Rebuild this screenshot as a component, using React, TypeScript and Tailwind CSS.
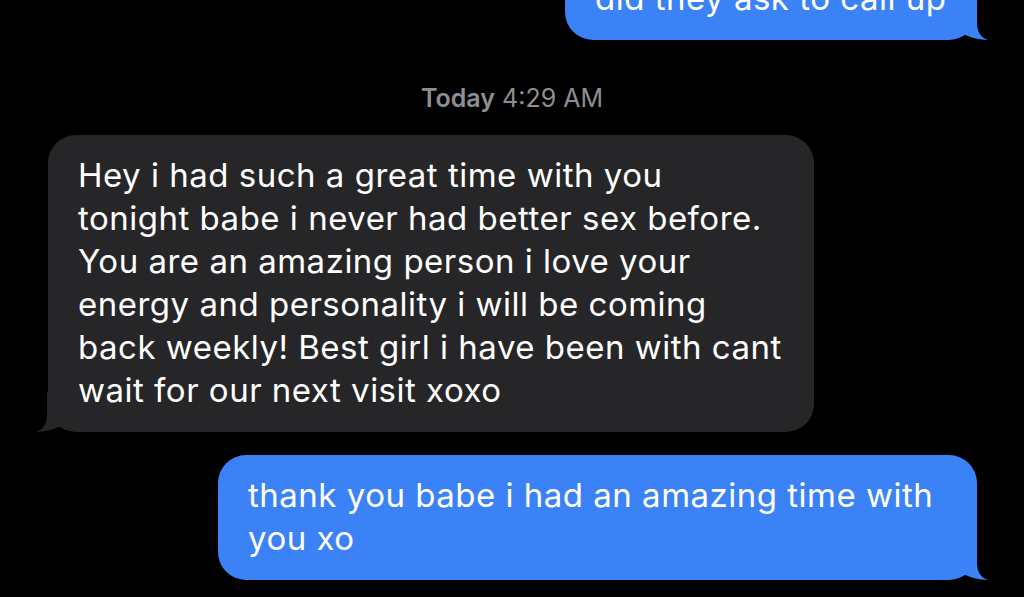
function Tail({color, side}: {color: string; side: 'left' | 'right'}) {
	const pos = side === 'right' ? 'right-[-11px]' : 'left-[-12px] -scale-x-100';
	return (
		<svg
			className={`absolute bottom-0 ${pos}`}
			width="51"
			height="40"
			viewBox="-40 -40 51 40"
			aria-hidden
		>
			<path
				d="M -40,-40 L 0,-40 L 0,-17 C 0,-7 5,-2 11,0 C 3,0 -10,-3 -17,-8 C -22,-3 -28,0 -40,0 Z"
				fill={color}
			/>
		</svg>
	);
}

function Bubble({
	lines,
	side,
	className,
}: {
	lines: string[];
	side: 'left' | 'right';
	className: string;
}) {
	const blue = side === 'right';
	return (
		<div
			className={`relative rounded-[28px] pt-[19px] pb-[20px] px-[30px] text-[33px] leading-[43px] tracking-[0.5px] text-white ${
				blue ? 'bg-[#3b82f6]' : 'bg-[#262628]'
			} ${className}`}
		>
			<Tail color={blue ? '#3b82f6' : '#262628'} side={side} />
			{lines.map((l, i) => (
				<span key={i} className="relative block whitespace-nowrap">
					{l}
				</span>
			))}
		</div>
	);
}

export default function App() {
	return (
		<div className="w-[1024px] h-[597px] bg-black overflow-hidden font-['Inter','Noto_Sans',sans-serif]">
			<div className="flex flex-col">
				<Bubble
					side="right"
					lines={['did they ask to call up']}
					className="self-end mr-[47px] mt-[-42px] w-[412px]"
				/>

				<p className="mt-[43px] text-center text-[25px] leading-[30px] text-[#8e8e93]">
					<span className="font-semibold">Today</span> 4:29 AM
				</p>

				<Bubble
					side="left"
					lines={[
						'Hey i had such a great time with you',
						'tonight babe i never had better sex before.',
						'You are an amazing person i love your',
						'energy and personality i will be coming',
						'back weekly! Best girl i have been with cant',
						'wait for our next visit xoxo',
					]}
					className="self-start ml-[48px] mt-[22px] w-[766px]"
				/>

				<Bubble
					side="right"
					lines={['thank you babe i had an amazing time with', 'you xo']}
					className="self-end mr-[47px] mt-[23px] w-[759px]"
				/>
			</div>
		</div>
	);
}
